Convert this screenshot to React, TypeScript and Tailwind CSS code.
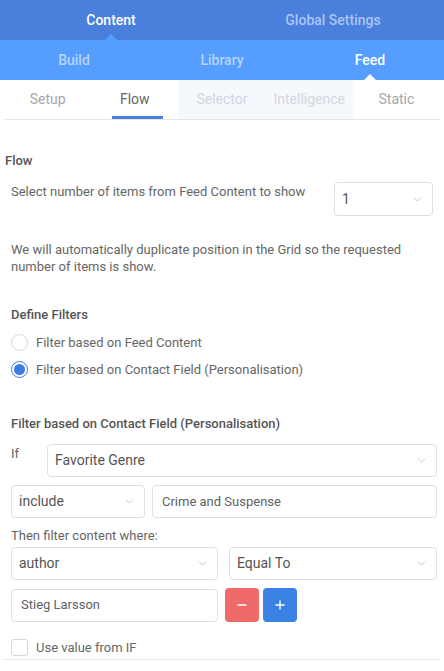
import { ChevronDown, Minus, Plus } from "lucide-react";

const font = { fontFamily: "Roboto, 'Liberation Sans', sans-serif" };

function Caret({ color }: { color: string }) {
	return (
		<span
			className={`absolute bottom-0 left-1/2 -translate-x-1/2 w-0 h-0 border-l-[6px] border-r-[6px] border-b-[6px] border-l-transparent border-r-transparent ${color}`}
		/>
	);
}

function SelectBox({ value, className }: { value: string; className?: string }) {
	return (
		<div
			className={`h-[33px] flex items-center justify-between border border-[#dcdfe6] rounded-[4px] pl-[7px] pr-[8px] text-[14px] text-[#555] bg-white ${className ?? ""}`}
		>
			<span>{value}</span>
			<ChevronDown className="w-[13px] h-[13px] text-[#b8bcc4]" strokeWidth={1.5} />
		</div>
	);
}

function InputBox({ value, className }: { value: string; className?: string }) {
	return (
		<div
			className={`h-[33px] flex items-center border border-[#dcdfe6] rounded-[4px] px-[9px] text-[13px] text-[#606266] bg-white ${className ?? ""}`}
		>
			{value}
		</div>
	);
}

export default function App() {
	const subTabs = [
		{ label: "Setup", state: "normal" },
		{ label: "Flow", state: "active" },
		{ label: "Selector", state: "disabled" },
		{ label: "Intelligence", state: "disabled" },
		{ label: "Static", state: "normal" },
	];

	return (
		<div className="w-[444px] h-[671px] bg-white overflow-hidden" style={font}>
			{/* Top tabs */}
			<div className="h-[40px] bg-[#4a7fdc] flex text-[14px]">
				<div className="relative flex-1 flex items-center justify-center text-white font-medium">
					Content
					<Caret color="border-b-[#559dff]" />
				</div>
				<div className="flex-1 flex items-center justify-center text-[#a9c6f5] font-medium">
					Global Settings
				</div>
			</div>

			{/* Second tabs */}
			<div className="h-[40px] bg-[#559dff] flex text-[14px] font-medium">
				<div className="flex-1 flex items-center justify-center text-[#b5d4fe]">Build</div>
				<div className="flex-1 flex items-center justify-center text-[#b5d4fe]">Library</div>
				<div className="relative flex-1 flex items-center justify-center text-white">
					Feed
					<Caret color="border-b-white" />
				</div>
			</div>

			{/* Third tabs */}
			<div className="px-1">
				<div className="h-[40px] flex border-b border-[#e6e6e6] text-[14px]">
					{subTabs.map((t) => (
						<div
							key={t.label}
							className={`relative flex-1 flex items-center justify-center ${
								t.state === "disabled"
									? "bg-[#f5f8fd] text-[#d3d6dc]"
									: t.state === "active"
									? "text-[#666]"
									: "text-[#a7a7a7]"
							}`}
						>
							{t.label}
							{t.state === "active" && (
								<span className="absolute bottom-0 left-[21px] w-[51px] h-[3px] bg-[#4a7fdc]" />
							)}
						</div>
					))}
				</div>
			</div>

			{/* Body */}
			<div className="px-[5px] pt-[32px] text-[13px] text-[#666]">
				<div className="font-medium text-[#555] leading-[18px]">Flow</div>

				<div className="pl-[6px] pr-[6px] mt-[12px] flex justify-between">
					<span className="pt-[1px] leading-[18px]">Select number of items from Feed Content to show</span>
					<SelectBox value="1" className="w-[99px] h-[34px]" />
				</div>

				<p className="pl-[6px] mt-[25px] leading-[17px]">
					We will automatically duplicate position in the Grid so the requested number of items is show.
				</p>

				<div className="pl-[6px] mt-[31px]">
					<div className="font-medium text-[#555] leading-[18px]">Define Filters</div>
					<div className="mt-[10px] flex flex-col gap-[10px]">
						<label className="flex items-center gap-[8px] leading-[17px]">
							<span className="w-[17px] h-[17px] rounded-full border border-[#d4d7dd] bg-white" />
							Filter based on Feed Content
						</label>
						<label className="flex items-center gap-[8px] leading-[17px]">
							<span className="w-[17px] h-[17px] rounded-full border-[1.5px] border-[#3a7ee4] flex items-center justify-center">
								<span className="w-[11px] h-[11px] rounded-full bg-[#3a7ee4]" />
							</span>
							Filter based on Contact Field (Personalisation)
						</label>
					</div>

					<div className="mt-[37px] font-medium text-[#555] leading-[18px]">
						Filter based on Contact Field (Personalisation)
					</div>

					<div className="mt-[11px] flex gap-[22px] pr-[2px]">
						<span className="pt-[1px] leading-[17px] w-[14px]">If</span>
						<SelectBox value="Favorite Genre" className="flex-1" />
					</div>

					<div className="mt-[8px] flex gap-[7px] pr-[2px]">
						<SelectBox value="include" className="w-[134px]" />
						<InputBox value="Crime and Suspense" className="flex-1" />
					</div>

					<div className="mt-[9px] leading-[17px]">Then filter content where:</div>

					<div className="mt-[3px] flex gap-[11px] pr-[2px]">
						<SelectBox value="author" className="w-[207px]" />
						<SelectBox value="Equal To" className="flex-1" />
					</div>

					<div className="mt-[8px] flex items-center">
						<InputBox value="Stieg Larsson" className="w-[207px]" />
						<button className="ml-[7px] w-[34px] h-[34px] rounded-[4px] bg-[#f06a6a] flex items-center justify-center text-white">
							<Minus className="w-[14px] h-[14px]" strokeWidth={2.5} />
						</button>
						<button className="ml-[4px] w-[34px] h-[34px] rounded-[4px] bg-[#3a82e4] flex items-center justify-center text-white">
							<Plus className="w-[14px] h-[14px]" strokeWidth={2.5} />
						</button>
					</div>

					<label className="mt-[17px] flex items-center gap-[8px] leading-[17px]">
						<span className="w-[17px] h-[17px] rounded-[3px] border border-[#d4d7dd] bg-white" />
						Use value from IF
					</label>
				</div>
			</div>
			<div className="mx-1 mt-[3px] border-b border-[#e6e6e6]" />
		</div>
	);
}
